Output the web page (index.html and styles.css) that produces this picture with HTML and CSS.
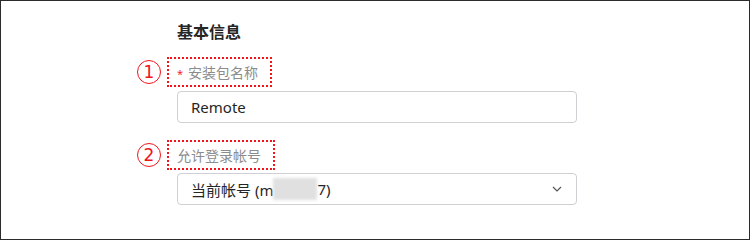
FILE: index.html
```html
<!DOCTYPE html>
<html lang="zh-CN">
<head>
    <meta charset="UTF-8">
    <meta name="viewport" content="width=device-width, initial-scale=1.0">
    <title>基本信息</title>
    <link rel="stylesheet" href="styles.css">
</head>
<body>
    <div class="page">
        <h2 class="title">基本信息</h2>

        <div class="field">
            <div class="label-box">
                <span class="marker">1</span>
                <span class="required">*</span>
                <span class="label-text">安装包名称</span>
            </div>
            <div class="input">Remote</div>
        </div>

        <div class="field">
            <div class="label-box">
                <span class="marker">2</span>
                <span class="label-text">允许登录帐号</span>
            </div>
            <div class="input select">
                <span>当前帐号 (m</span><span class="masked"></span><span>7)</span>
                <svg class="chevron" width="10" height="6" viewBox="0 0 10 6">
                    <path d="M1 1 L5 5 L9 1" fill="none" stroke="#555" stroke-width="1.2"/>
                </svg>
            </div>
        </div>
    </div>
</body>
</html>
```

FILE: styles.css
```css
/* Global Styles */
body {
    margin: 0;
    padding: 0;
    background: #fff;
    font-family: "Noto Sans", "Noto Sans CJK SC", sans-serif;
    color: #333;
}

.page {
    width: 750px;
    height: 240px;
    box-sizing: border-box;
    border: 1px solid #2b2b2b;
    padding: 20px 0 0 176px;
}

.title {
    margin: 0;
    font-size: 16px;
    line-height: 22px;
    font-weight: 700;
    color: #262626;
}

/* Form fields */
.field {
    margin-top: 14px;
}

.field + .field {
    margin-top: 17px;
}

.label-box {
    position: relative;
    display: inline-flex;
    align-items: center;
    height: 30px;
    box-sizing: border-box;
    margin-left: -10px;
    padding: 0 12px 0 8px;
    border: 2px dotted #f2141a;
    font-size: 14px;
    color: #8c8c8c;
}

.marker {
    position: absolute;
    left: -32px;
    top: 1px;
    width: 24px;
    height: 24px;
    box-sizing: border-box;
    border: 1px solid #f2141a;
    border-radius: 50%;
    color: #f2141a;
    font-family: "DejaVu Sans", sans-serif;
    font-size: 17px;
    line-height: 22px;
    text-align: center;
}

.required {
    color: #f5222d;
    margin-right: 5px;
    font-size: 11px;
    line-height: 1;
    padding-top: 2px;
}

.input {
    display: flex;
    align-items: center;
    width: 400px;
    height: 32px;
    box-sizing: border-box;
    margin-top: 4px;
    padding: 0 13px;
    border: 1px solid #cfcfd4;
    border-radius: 4px;
    font-size: 15px;
    color: #262626;
}

.select {
    margin-top: 3px;
}

.masked {
    display: inline-block;
    width: 44px;
    height: 22px;
    background: #e0e0e0;
    filter: blur(1.5px);
}

.chevron {
    margin-left: auto;
    margin-right: 1px;
}
```
